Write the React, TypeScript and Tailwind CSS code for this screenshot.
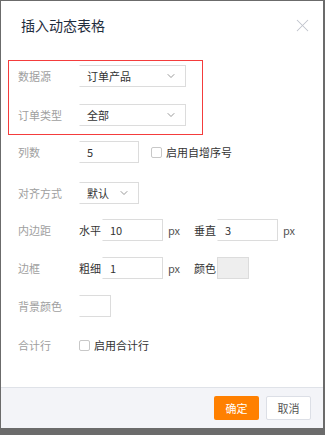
import { ChevronDown, X } from "lucide-react";
import type { ReactNode } from "react";

const FONT = { fontFamily: '"Noto Sans CJK SC", "Liberation Sans", sans-serif' };

function Label({ children }: { children: ReactNode }) {
  return <div className="w-[61px] shrink-0 text-[11px] text-[#a0a0a0]">{children}</div>;
}

function Select({ value, width }: { value: string; width: string }) {
  return (
    <div
      className={`${width} h-[22px] flex items-center justify-between pl-[7px] pr-[8px] border border-[#dcdcdc] border-l-transparent bg-white`}
    >
      <span className="text-[11px] text-[#333]">{value}</span>
      <ChevronDown size={12} strokeWidth={1.5} className="text-[#777]" />
    </div>
  );
}

function Input({ value, width }: { value: string; width: string }) {
  return (
    <div
      className={`${width} h-[22px] flex items-center pl-[7px] border border-[#dcdcdc] border-l-transparent bg-white`}
    >
      <span className="text-[11px] text-[#333]">{value}</span>
    </div>
  );
}

function Checkbox() {
  return <div className="w-[11px] h-[11px] rounded-[2px] border border-[#c8c8c8] bg-white" />;
}

export default function App() {
  return (
    <div className="w-[325px] h-[435px] bg-[#6b6b6b] pl-px pt-px" style={FONT}>
      <div className="w-[322px] h-[427px] bg-white flex flex-col">
        {/* Header */}
        <div className="h-[48px] shrink-0 flex items-center justify-between pl-[20px] pr-[10px]">
          <span className="text-[14px] text-[#1f2d3d]">插入动态表格</span>
          <X size={21} strokeWidth={1.2} className="text-[#c0c4cc]" />
        </div>

        {/* Body */}
        <div className="flex-1 px-[7px]">
          <div className="mt-[11px] w-[195px] border border-[#f43c3c] pt-[4px] pb-[8px] pl-[9px] flex flex-col gap-[17px]">
            <div className="h-[22px] flex items-center">
              <Label>数据源</Label>
              <Select value="订单产品" width="w-[107px]" />
            </div>
            <div className="h-[22px] flex items-center">
              <Label>订单类型</Label>
              <Select value="全部" width="w-[107px]" />
            </div>
          </div>

          <div className="pl-[10px] flex flex-col">
            <div className="mt-[6px] h-[22px] flex items-center">
              <Label>列数</Label>
              <Input value="5" width="w-[60px]" />
              <div className="ml-[12px] flex items-center gap-[4px]">
                <Checkbox />
                <span className="text-[11px] text-[#333]">启用自增序号</span>
              </div>
            </div>

            <div className="mt-[19px] h-[22px] flex items-center">
              <Label>对齐方式</Label>
              <Select value="默认" width="w-[60px]" />
            </div>

            <div className="mt-[15px] h-[22px] flex items-center">
              <Label>内边距</Label>
              <span className="w-[23px] text-[11px] text-[#333]">水平</span>
              <Input value="10" width="w-[61px]" />
              <span className="w-[31px] pl-[5px] text-[11px] text-[#555]">px</span>
              <span className="w-[23px] text-[11px] text-[#333]">垂直</span>
              <Input value="3" width="w-[61px]" />
              <span className="pl-[5px] text-[11px] text-[#555]">px</span>
            </div>

            <div className="mt-[16px] h-[22px] flex items-center">
              <Label>边框</Label>
              <span className="w-[23px] text-[11px] text-[#333]">粗细</span>
              <Input value="1" width="w-[61px]" />
              <span className="w-[31px] pl-[5px] text-[11px] text-[#555]">px</span>
              <span className="w-[23px] text-[11px] text-[#333]">颜色</span>
              <div className="w-[32px] h-[22px] border border-[#dcdcdc] bg-[#eeeeee]" />
            </div>

            <div className="mt-[16px] h-[22px] flex items-center">
              <Label>背景颜色</Label>
              <div className="w-[32px] h-[22px] border border-[#dcdcdc] border-l-transparent bg-white" />
            </div>

            <div className="mt-[17px] h-[22px] flex items-center">
              <Label>合计行</Label>
              <div className="flex items-center gap-[4px]">
                <Checkbox />
                <span className="text-[11px] text-[#333]">启用合计行</span>
              </div>
            </div>
          </div>
        </div>

        {/* Footer */}
        <div className="h-[41px] shrink-0 border-t border-[#dfe2e8] bg-[#f3f4f8] flex items-center justify-end gap-[7px] pr-[12px]">
          <button className="w-[45px] h-[24px] rounded-[2px] bg-[#ff8000] text-[11px] text-white">确定</button>
          <button className="w-[45px] h-[24px] rounded-[2px] border border-[#dcdfe6] bg-white text-[11px] text-[#555]">
            取消
          </button>
        </div>
      </div>
    </div>
  );
}
